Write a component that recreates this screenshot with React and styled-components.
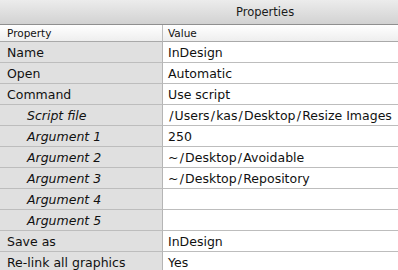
import React from "react";
import styled, { createGlobalStyle } from "styled-components";

const GlobalStyle = createGlobalStyle`
  html, body {
    margin: 0;
    padding: 0;
    background: #ffffff;
  }
  body {
    font-family: "DejaVu Sans", "Liberation Sans", sans-serif;
    overflow: hidden;
  }
`;

const Panel = styled.div`
  width: 398px;
  height: 270px;
  overflow: hidden;
  background: #ffffff;
`;

const TitleBar = styled.div`
  height: 25px;
  box-sizing: border-box;
  padding-left: 236px;
  display: flex;
  align-items: center;
  font-size: 11.5px;
  color: #1a1a1a;
  background: linear-gradient(#ececec, #d2d2d2);
  border-bottom: 1px solid #8f8f8f;
`;

const Grid = styled.div`
  display: grid;
  grid-template-columns: 163px 1fr;
`;

const HeadCell = styled.div`
  height: 17px;
  box-sizing: border-box;
  padding-left: ${({ first }) => (first ? 7 : 5)}px;
  display: flex;
  align-items: center;
  font-size: 10.5px;
  color: #111;
  background: linear-gradient(#ffffff, #eeeeee);
  border-bottom: 1px solid #a9a9a9;
  border-right: ${({ first }) => (first ? "1px solid #bcbcbc" : "none")};
`;

const NameCell = styled.div`
  height: 21px;
  box-sizing: border-box;
  padding-left: ${({ sub }) => (sub ? 27 : 7)}px;
  display: flex;
  align-items: center;
  font-size: 12.5px;
  font-style: ${({ sub }) => (sub ? "italic" : "normal")};
  color: #111;
  background: #e0e0e0;
  border-bottom: 1px solid #bdbdbd;
  border-right: 1px solid #b5b5b5;
  white-space: nowrap;
`;

const ValueCell = styled.div`
  height: 21px;
  box-sizing: border-box;
  padding-left: 5px;
  display: flex;
  align-items: center;
  font-size: 12.5px;
  color: #111;
  background: #ffffff;
  border-bottom: 1px solid #bdbdbd;
  white-space: nowrap;
  overflow: hidden;
`;

// Lucida Grande draws path slashes with more side bearing
const Slash = styled.span`
  margin: 0 1.2px;
`;

const renderPath = (text) =>
  text.split("/").map((part, i) => (
    <React.Fragment key={i}>
      {i > 0 && <Slash>/</Slash>}
      {part}
    </React.Fragment>
  ));

const rows = [
  { name: "Name", value: "InDesign" },
  { name: "Open", value: "Automatic" },
  { name: "Command", value: "Use script" },
  { name: "Script file", value: "/Users/kas/Desktop/Resize Images", sub: true },
  { name: "Argument 1", value: "250", sub: true },
  { name: "Argument 2", value: "~/Desktop/Avoidable", sub: true },
  { name: "Argument 3", value: "~/Desktop/Repository", sub: true },
  { name: "Argument 4", value: "", sub: true },
  { name: "Argument 5", value: "", sub: true },
  { name: "Save as", value: "InDesign" },
  { name: "Re-link all graphics", value: "Yes" },
];

const App = () => (
  <Panel>
    <GlobalStyle />
    <TitleBar>Properties</TitleBar>
    <Grid>
      <HeadCell first>Property</HeadCell>
      <HeadCell>Value</HeadCell>
      {rows.map((row) => (
        <React.Fragment key={row.name}>
          <NameCell sub={row.sub}>{row.name}</NameCell>
          <ValueCell>{renderPath(row.value)}</ValueCell>
        </React.Fragment>
      ))}
    </Grid>
  </Panel>
);

export default App;
